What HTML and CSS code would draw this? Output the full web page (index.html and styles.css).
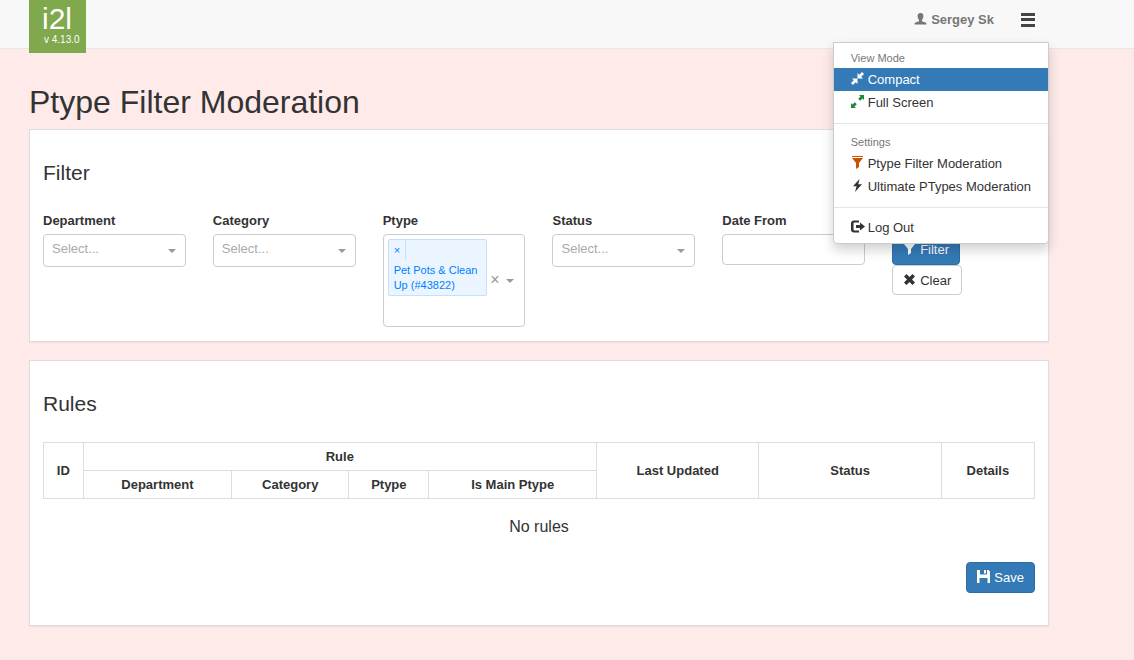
FILE: index.html
```html
<!DOCTYPE html>
<html lang="en">
<head>
<meta charset="utf-8">
<meta name="viewport" content="width=device-width, initial-scale=1">
<title>Ptype Filter Moderation</title>
<link rel="stylesheet" href="styles.css">
</head>
<body>
<header class="navbar">
  <div class="container navbar-inner">
    <a class="brand" href="#"><span class="brand-name">i2l</span><span class="brand-version">v 4.13.0</span></a>
    <div class="nav-right">
      <a class="user" href="#"><svg class="icon" viewBox="0 0 13 13"><path d="M6.500 1C4.200 1 3.500 2.500 3.600 4.200c.1 1.600.8 3 1.400 3.600v1.400L1.500 10.500C.8 10.900.5 11.500.5 12.500h12c0-1-.3-1.600-1-2L8 9.200V7.800c.6-.6 1.300-2 1.400-3.600C9.500 2.500 8.800 1 6.500 1z"/></svg>Sergey Sk</a>
      <button class="menu-toggle" type="button" aria-label="Menu"><svg width="14" height="14" viewBox="0 0 14 14"><path d="M0 0h14v3H0zM0 5h14v3H0zM0 11h14v3H0z"/></svg></button>
      <nav class="menu">
        <div class="menu-header">View Mode</div>
        <a class="menu-item active" href="#"><svg class="icon" viewBox="0 0 13 13"><path d="M6.500 6.500V1L8.300 2.800 11 0l2 2-2.800 2.700L12 6.500zM6.500 6.500V12L4.700 10.200 2 13l-2-2 2.800-2.700L1 6.500z"/></svg>Compact</a>
        <a class="menu-item" href="#"><svg class="icon green" viewBox="0 0 13 13"><path d="M8 0h5v5l-1.500-1.500L9.200 5.800 7.200 3.800 9.500 1.500zM5 13H0V8l1.500 1.500 2.300-2.300 2 2L3.500 11.500z"/></svg>Full Screen</a>
        <hr class="divider">
        <div class="menu-header">Settings</div>
        <a class="menu-item" href="#"><svg class="icon orange" viewBox="0 0 13 13"><path d="M1 0h11v1H1zM1 2h11L8 7v4l-3 2V7z"/></svg>Ptype Filter Moderation</a>
        <a class="menu-item" href="#"><svg class="icon" viewBox="0 0 13 13"><path d="M8.500 0 2 7.200h3.600L4 13l7-7.800H7.300z"/></svg>Ultimate PTypes Moderation</a>
        <hr class="divider">
        <a class="menu-item" href="#"><svg class="icon wide" viewBox="0 0 14 13"><path d="M8 .5v2H3.500q-1 0-1 1v6q0 1 1 1H8v2H3q-3 0-3-3v-6q0-3 3-3zM9 2.500l5 4-5 4V8H5V5h4z"/></svg>Log Out</a>
      </nav>
    </div>
  </div>
</header>

<main class="container">
  <h1 class="page-title">Ptype Filter Moderation</h1>

  <section class="panel">
    <h2 class="panel-title">Filter</h2>
    <form class="filters">
      <div class="field">
        <label for="department">Department</label>
        <div class="select-wrap"><select id="department" class="control select"><option>Select...</option></select></div>
      </div>
      <div class="field">
        <label for="category">Category</label>
        <div class="select-wrap"><select id="category" class="control select"><option>Select...</option></select></div>
      </div>
      <div class="field">
        <label for="ptype">Ptype</label>
        <div class="control multi">
          <div class="multi-values">
            <div class="tag"><button class="tag-remove" type="button" aria-label="Remove">×</button><span class="tag-label">Pet Pots &amp; Clean Up (#43822)</span></div>
            <input id="ptype" class="multi-input" type="text">
          </div>
          <button class="multi-clear" type="button" aria-label="Clear all">×</button>
          <span class="caret"></span>
        </div>
      </div>
      <div class="field">
        <label for="status">Status</label>
        <div class="select-wrap"><select id="status" class="control select"><option>Select...</option></select></div>
      </div>
      <div class="field">
        <label for="date-from">Date From</label>
        <input id="date-from" class="control text" type="text">
      </div>
      <div class="actions">
        <button class="btn primary" type="button"><svg class="icon" viewBox="0 0 13 13"><path d="M1 0h11v1H1zM1 2h11L8 7v4l-3 2V7z"/></svg>Filter</button>
        <button class="btn" type="reset"><svg class="icon" viewBox="0 0 13 13"><path d="M3.500 1 6.500 4l3-3L12 3.500l-3 3 3 3L9.500 12l-3-3-3 3L1 9.500l3-3-3-3z"/></svg>Clear</button>
      </div>
    </form>
  </section>

  <section class="panel">
    <h2 class="panel-title">Rules</h2>
    <table class="rules">
      <colgroup><col class="c-id"><col class="c-department"><col class="c-category"><col class="c-ptype"><col class="c-main"><col class="c-updated"><col class="c-status"><col class="c-details"></colgroup>
      <thead>
        <tr><th rowspan="2">ID</th><th colspan="4">Rule</th><th rowspan="2">Last Updated</th><th rowspan="2">Status</th><th rowspan="2">Details</th></tr>
        <tr><th>Department</th><th>Category</th><th>Ptype</th><th>Is Main Ptype</th></tr>
      </thead>
    </table>
    <p class="empty">No rules</p>
    <div class="panel-footer">
      <button class="btn primary" type="button"><svg class="icon" viewBox="0 0 13 13"><path d="M0 0h3v4.500h7V0h1.500L13 1.500V13h-2.500V8h-8v5H0zM7 0h2v3.500H7z"/></svg>Save</button>
    </div>
  </section>
</main>
</body>
</html>
```
FILE: styles.css
```css
* { box-sizing: border-box; }
body {
  margin: 0;
  min-height: 100vh;
  background: #ffeaea;
  color: #333;
  font: 13px/19px "Liberation Sans", Arial, sans-serif;
}
a { color: inherit; text-decoration: none; }
button, input, select { font: inherit; color: inherit; }
.container { max-width: 1049px; padding-left: 29px; }

.navbar { height: 49px; background: #f8f8f8; border-bottom: 1px solid #e7e7e7; }
.navbar-inner { display: flex; justify-content: space-between; align-items: flex-start; }
.brand {
  display: flex;
  flex-direction: column;
  width: 57px;
  height: 53px;
  padding: 4px 0 0 13px;
  background: #80a84d;
  color: #fff;
}
.brand-name { font-size: 30px; line-height: 30px; }
.brand-version { padding-left: 2px; font-size: 10px; line-height: 12px; }
.nav-right { position: relative; display: flex; align-items: center; gap: 27px; padding: 10px 14px 0 0; }
.user { color: #777; font-weight: bold; }
.menu-toggle { display: flex; padding: 0; border: 0; background: none; fill: #444; }
.icon { width: 13px; height: 13px; margin-right: 4px; fill: currentColor; vertical-align: -1px; }
.wide { width: 14px; margin-right: 3px; }
.green { color: #1e8a3c; }
.orange { color: #c75300; }

.menu {
  position: absolute;
  top: 42px;
  right: 0;
  padding: 5px 0 4px;
  background: #fff;
  border: 1px solid #ccc;
  border-radius: 0 0 4px 4px;
  box-shadow: 0 6px 12px rgba(0, 0, 0, .18);
  white-space: nowrap;
}
.menu-header { padding: 0 17px; color: #777; font-size: 11px; line-height: 20px; }
.menu-item { display: block; padding: 2px 17px; }
.menu-item.active { background: #337ab7; color: #fff; }
.divider { height: 1px; margin: 9px 0 8px; border: 0; background: #e5e5e5; }

.page-title { margin: 34px 0 8px; font-size: 32px; line-height: 38px; font-weight: normal; }
.panel {
  margin-bottom: 18px;
  padding: 30px 13px 14px;
  background: #fff;
  border: 1px solid #ddd;
  box-shadow: 0 1px 1px rgba(0, 0, 0, .05);
}
.panel-title { margin: 0 0 25px; font-size: 21px; line-height: 26px; font-weight: normal; }

.filters { display: grid; grid-template-columns: repeat(6, minmax(0, 1fr)); gap: 27px; }
.field label { display: block; margin-bottom: 4px; font-weight: bold; }
.control { display: block; width: 100%; background: #fff; border: 1px solid #ccc; border-radius: 4px; }
.select-wrap { position: relative; }
.select { height: 33px; padding: 0 24px 4px 8px; color: #aaa; appearance: none; }
.select-wrap::after, .caret { content: ""; border: 4px solid transparent; border-top-color: #999; border-bottom: 0; }
.select-wrap::after { position: absolute; top: 15px; right: 10px; pointer-events: none; }
.text { height: 31px; padding: 0 10px; }
.multi { display: flex; align-items: center; padding: 4px 10px 0 4px; }
.multi-values { flex: 1; min-width: 0; }
.tag { border: 1px solid #c2e0ff; border-radius: 2px; background: #ebf5ff; color: #007eff; font-size: 11px; line-height: 15px; }
.tag-remove { display: block; height: 20px; padding: 0 5px; border: 0; border-right: 1px solid #c2e0ff; background: none; }
.tag-label { display: block; padding: 3px 5px 2px; }
.multi-input { display: block; width: 100%; height: 30px; border: 0; outline: 0; background: none; }
.multi-clear { width: 15px; padding: 0 0 6px; border: 0; background: none; color: #999; font-size: 16px; }
.multi .caret { margin: 0 0 4px 4px; }
.actions { display: flex; flex-direction: column; align-items: flex-start; padding-top: 23px; }
.btn { height: 31px; padding: 0 10px; border: 1px solid #ccc; border-radius: 4px; background: #fff; }
.btn:not(.primary) { height: 30px; }
.primary { background: #337ab7; border-color: #2e6da4; color: #fff; }

.rules { width: 100%; table-layout: fixed; border-collapse: collapse; }
.rules th { height: 28px; padding: 4px; border: 1px solid #ddd; line-height: 18px; }
.c-id { width: 4%; }
.c-department { width: 15%; }
.c-category { width: 11.8%; }
.c-ptype { width: 8.1%; }
.c-main { width: 16.9%; }
.c-updated { width: 16.4%; }
.c-status { width: 18.4%; }
.c-details { width: 9.4%; }
.empty { margin: 18px 0 26px; font-size: 16px; line-height: 19px; text-align: center; }
.panel-footer { display: flex; justify-content: flex-end; padding-bottom: 18px; }
```
